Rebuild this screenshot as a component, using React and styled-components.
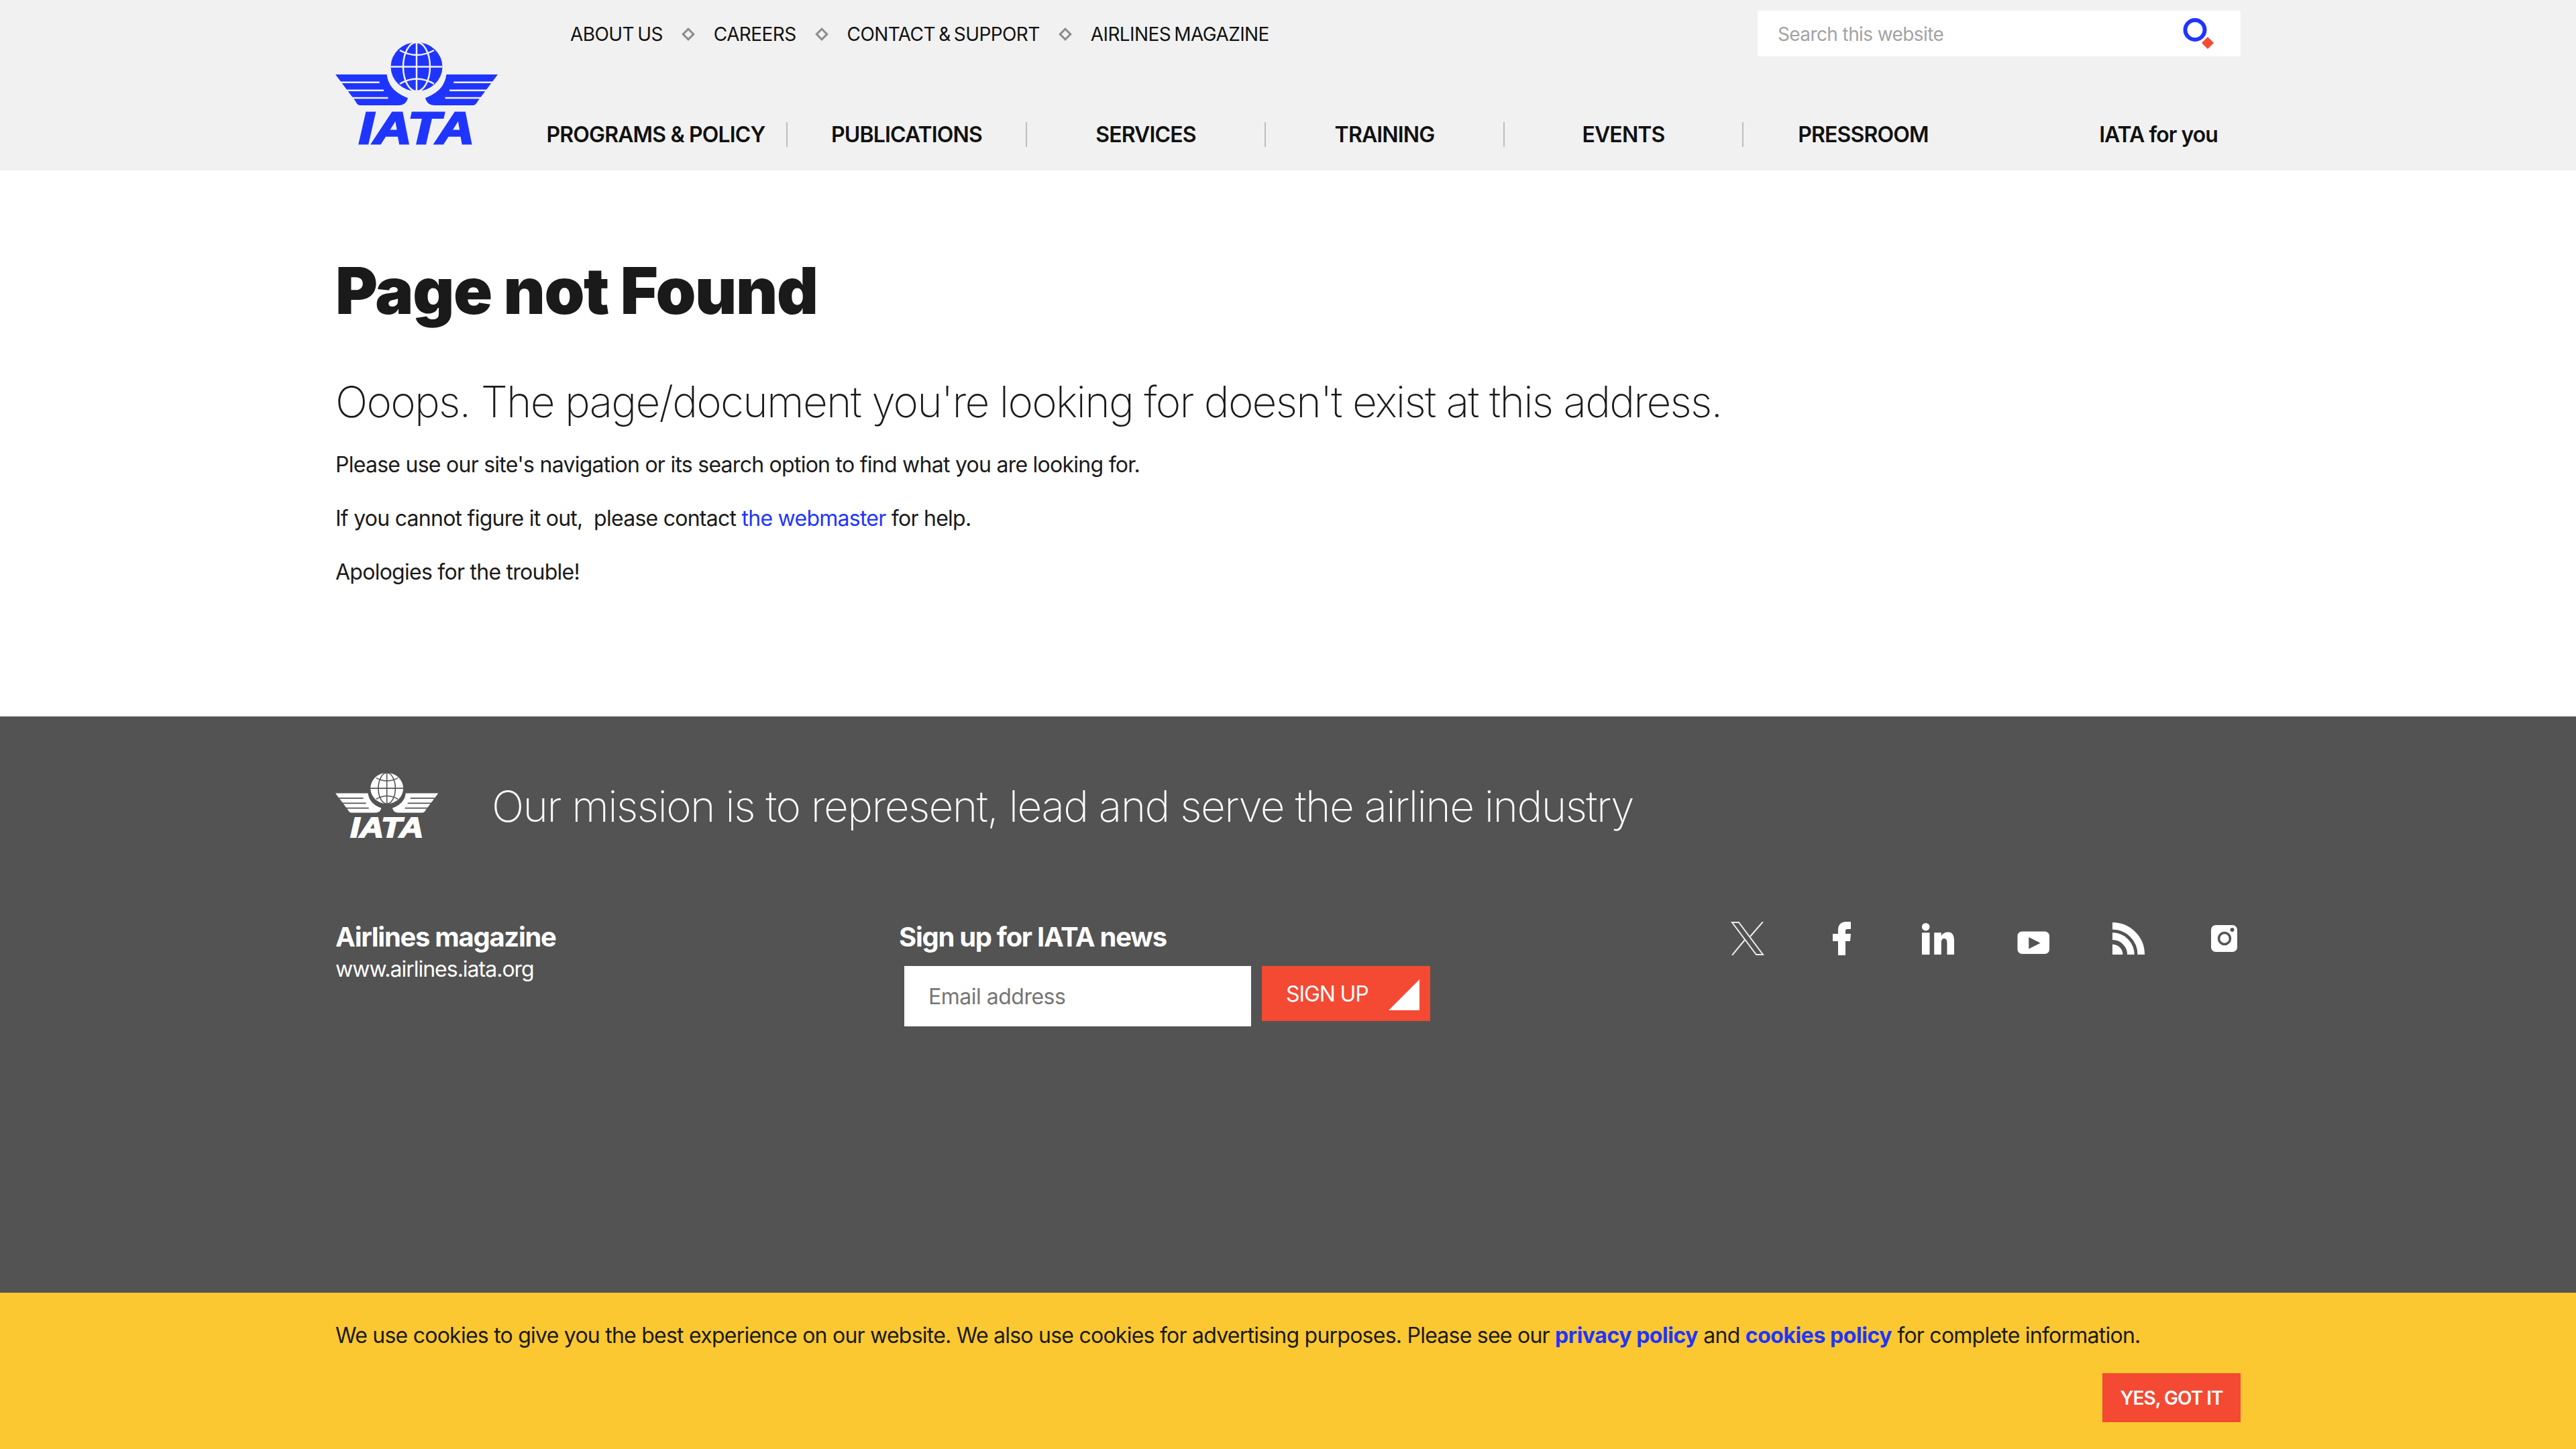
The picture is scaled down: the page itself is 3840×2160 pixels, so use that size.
import React from 'react';
import styled, { createGlobalStyle } from 'styled-components';

const BLUE = '#1f35ff';
const RED = '#f44932';
const FOOTER = '#535353';

const GlobalStyle = createGlobalStyle`
	html, body {
		margin: 0;
		padding: 0;
		background: #fff;
		font-family: Inter, "Liberation Sans", sans-serif;
		color: #1a1a1a;
	}
	* {
		box-sizing: border-box;
	}
`;

const Page = styled.div`
	width: 3840px;
	height: 2160px;
	overflow: hidden;
`;

const Header = styled.header`
	height: 254px;
	background: #f1f1f1;
	display: flex;
	justify-content: center;
`;

const HeaderInner = styled.div`
	width: 2840px;
	display: flex;
`;

const LogoSlot = styled.a`
	width: 283px;
	flex: none;
	padding-top: 63px;
`;

const HeaderRight = styled.div`
	flex: 1;
	display: flex;
	flex-direction: column;
	padding-top: 16px;
`;

const TopRow = styled.div`
	height: 68px;
	display: flex;
	justify-content: space-between;
	align-items: center;
	padding-left: 67px;
`;

const TopLinks = styled.nav`
	display: flex;
	align-items: center;
	gap: 28px;
	padding-top: 1px;
`;

const TopLink = styled.a`
	font-size: 28px;
	letter-spacing: -0.6px;
	word-spacing: -2px;
	color: #111;
	white-space: nowrap;
`;

const Diamond = styled.span`
	width: 14px;
	height: 14px;
	margin: 0 3px;
	border: 3px solid #8c8c8c;
	transform: rotate(45deg);
`;

const SearchBox = styled.form`
	width: 720px;
	height: 68px;
	background: #fff;
	display: flex;
	padding-right: 40px;
`;

const SearchInput = styled.input`
	flex: 1;
	border: 0;
	outline: 0;
	background: transparent;
	padding: 1px 0 0 30px;
	font-family: inherit;
	font-size: 28px;
	letter-spacing: -0.6px;

	&::placeholder {
		color: #a3a3a3;
		opacity: 1;
	}
`;

const SearchIcon = styled.svg`
	width: 46px;
	height: 46px;
	margin-top: 11px;
`;

const MainNav = styled.nav`
	margin-top: 98px;
	height: 37px;
	display: flex;
	align-items: stretch;
`;

const NavCell = styled.a`
	width: ${props => props.$width}px;
	display: flex;
	align-items: center;
	justify-content: center;
	font-size: 32px;
	font-weight: 600;
	letter-spacing: -0.85px;
	color: #111;
	white-space: nowrap;
	border-right: ${props => props.$last ? '0' : '2px solid #bdbdbd'};
`;

const NavExtra = styled.a`
	margin-left: auto;
	padding-right: 34px;
	display: flex;
	align-items: center;
	font-size: 32px;
	font-weight: 600;
	letter-spacing: -0.95px;
	color: #111;
`;

const Main = styled.main`
	height: 814px;
	padding: 119px 500px 0;
`;

const Title = styled.h1`
	margin: 0 0 66px;
	font-size: 96px;
	line-height: 120px;
	font-weight: 900;
	letter-spacing: -1.4px;
	color: #1a1a1a;
`;

const Subtitle = styled.h2`
	margin: 0 0 30px;
	font-size: 64px;
	line-height: 80px;
	font-weight: 200;
	letter-spacing: -1.77px;
	color: #1a1a1a;
`;

const Text = styled.p`
	margin: 0 0 32px;
	font-size: 32px;
	line-height: 48px;
	letter-spacing: -0.74px;
	white-space: pre-wrap;
`;

const BlueLink = styled.a`
	color: ${BLUE};
	font-weight: ${props => props.$bold ? 700 : 400};
	letter-spacing: ${props => props.$bold ? '-0.45px' : 'inherit'};
`;

const Footer = styled.footer`
	height: 1092px;
	background: ${FOOTER};
	padding: 84px 500px 0;
	color: #fff;
`;

const MissionRow = styled.div`
	display: flex;
	align-items: flex-start;
	gap: 79px;
`;

const Mission = styled.p`
	margin: 10px 0 0;
	font-size: 64px;
	line-height: 80px;
	font-weight: 200;
	letter-spacing: -1.61px;
`;

const FooterGrid = styled.div`
	margin-top: 115px;
	display: flex;
	align-items: flex-start;
`;

const MagazineCol = styled.div`
	width: 840px;
`;

const ColTitle = styled.div`
	font-size: 40px;
	line-height: 48px;
	font-weight: 700;
	letter-spacing: -1.3px;
`;

const MagazineUrl = styled.a`
	display: block;
	margin-top: 4px;
	font-size: 32px;
	line-height: 40px;
	letter-spacing: -1px;
`;

const SignUpCol = styled.div`
	flex: 1;
`;

const SignUpForm = styled.form`
	margin: 19px 0 0 8px;
	display: flex;
	align-items: flex-start;
	gap: 16px;
`;

const EmailInput = styled.input`
	width: 517px;
	height: 90px;
	border: 0;
	outline: 0;
	background: #fff;
	padding: 0 0 0 36px;
	font-family: inherit;
	font-size: 32px;
	letter-spacing: -0.5px;

	&::placeholder {
		color: #757575;
		opacity: 1;
	}
`;

const SignUpButton = styled.button`
	width: 251px;
	height: 82px;
	border: 0;
	background: ${RED};
	color: #fff;
	display: flex;
	align-items: center;
	justify-content: space-between;
	padding: 0 16px 0 36px;
	font-family: inherit;
	font-size: 32px;
	letter-spacing: -1.1px;
`;

const Corner = styled.svg`
	width: 46px;
	height: 46px;
	margin-top: 4px;
`;

const Socials = styled.div`
	margin-top: 1px;
	display: flex;
	gap: 92px;
`;

const SocialIcon = styled.svg`
	width: 50px;
	height: 50px;
	display: block;
`;

const CookieBar = styled.div`
	position: fixed;
	left: 0;
	right: 0;
	bottom: 0;
	height: 233px;
	background: #fbc831;
	padding: 40px 500px 0;
`;

const CookieText = styled.p`
	margin: 0;
	font-size: 32px;
	line-height: 48px;
	letter-spacing: -0.76px;
	color: #1a1a1a;
`;

const CookieActions = styled.div`
	margin-top: 32px;
	display: flex;
	justify-content: flex-end;
`;

const CookieButton = styled.button`
	width: 206px;
	height: 73px;
	border: 0;
	background: ${RED};
	color: #fff;
	font-family: inherit;
	font-size: 28px;
	font-weight: 600;
	letter-spacing: -1px;
`;

const LogoSvg = styled.svg`
	display: block;
	overflow: visible;
`;

const LogoWord = styled.text`
	font-family: "Liberation Sans", Arial, sans-serif;
	font-size: 66px;
	font-weight: 700;
	font-style: italic;
`;

// Una sola ala, la derecha sale de reflejarla
const Wing = ({ fill, cut }) => (
	<g>
		<path fill={fill} d="M0 48 H76.6 C79 66 90 76 108 83 C106 90 102 94 94 94 H38 C34 94 32 92 30 88 Z" />
		<g stroke={cut} strokeWidth="2.6">
			<path d="M4 59.7 H65.7" />
			<path d="M14 71.7 H72" />
			<path d="M24 83 H78.5" />
		</g>
	</g>
);

const Logo = ({ width, fill, cut }) => (
	<LogoSvg width={width} viewBox="0 0 243 168">
		<Wing fill={fill} cut={cut} />
		<g transform="translate(242 0) scale(-1 1)">
			<Wing fill={fill} cut={cut} />
		</g>
		<ellipse cx="121" cy="36.5" rx="43" ry="42" fill={cut} />
		<ellipse cx="121" cy="36.5" rx="38.5" ry="36.5" fill={fill} />
		<g fill="none" stroke={cut} strokeWidth="2.5">
			<ellipse cx="121" cy="36.5" rx="20" ry="36.5" />
			<path d="M121 0 V73" />
			<path d="M82.5 36.5 H159.5" />
			<path d="M96 12 Q121 26 147 12" />
			<path d="M96 62 Q121 47 147 62" />
		</g>
		<LogoWord x="35" y="151" fill={fill} stroke={fill} strokeWidth="3" textLength="172" lengthAdjust="spacingAndGlyphs">IATA</LogoWord>
	</LogoSvg>
);

const mainItems = [
	{ label: 'PROGRAMS & POLICY', width: 391 },
	{ label: 'PUBLICATIONS', width: 357 },
	{ label: 'SERVICES', width: 356 },
	{ label: 'TRAINING', width: 356 },
	{ label: 'EVENTS', width: 356 },
	{ label: 'PRESSROOM', width: 357, last: true },
];

const topItems = ['ABOUT US', 'CAREERS', 'CONTACT & SUPPORT', 'AIRLINES MAGAZINE'];

const App = () => {
	return (
		<Page>
			<GlobalStyle />
			<Header>
				<HeaderInner>
					<LogoSlot>
						<Logo width={243} fill={BLUE} cut="#f1f1f1" />
					</LogoSlot>
					<HeaderRight>
						<TopRow>
							<TopLinks>
								{topItems.map((item, i) => (
									<React.Fragment key={item}>
										{i > 0 && <Diamond />}
										<TopLink>{item}</TopLink>
									</React.Fragment>
								))}
							</TopLinks>
							<SearchBox>
								<SearchInput placeholder="Search this website" />
								<SearchIcon viewBox="0 0 46 46">
									<circle cx="18" cy="17.5" r="14.5" fill="none" stroke={BLUE} strokeWidth="6" />
									<polygon points="37,28 46,37 37,46 28,37" fill={RED} />
								</SearchIcon>
							</SearchBox>
						</TopRow>
						<MainNav>
							{mainItems.map(item => (
								<NavCell key={item.label} $width={item.width} $last={item.last}>{item.label}</NavCell>
							))}
							<NavExtra>IATA for you</NavExtra>
						</MainNav>
					</HeaderRight>
				</HeaderInner>
			</Header>
			<Main>
				<Title>Page not Found</Title>
				<Subtitle>Ooops. The page/document you're looking for doesn't exist at this address.</Subtitle>
				<Text>Please use our site's navigation or its search option to find what you are looking for.</Text>
				<Text>If you cannot figure it out,  please contact <BlueLink>the webmaster</BlueLink> for help.</Text>
				<Text>Apologies for the trouble!</Text>
			</Main>
			<Footer>
				<MissionRow>
					<Logo width={154} fill="#fff" cut={FOOTER} />
					<Mission>Our mission is to represent, lead and serve the airline industry</Mission>
				</MissionRow>
				<FooterGrid>
					<MagazineCol>
						<ColTitle>Airlines magazine</ColTitle>
						<MagazineUrl>www.airlines.iata.org</MagazineUrl>
					</MagazineCol>
					<SignUpCol>
						<ColTitle>Sign up for IATA news</ColTitle>
						<SignUpForm>
							<EmailInput placeholder="Email address" />
							<SignUpButton type="button">
								SIGN UP
								<Corner viewBox="0 0 46 46">
									<polygon points="46,0 46,46 0,46" fill="#fff" />
								</Corner>
							</SignUpButton>
						</SignUpForm>
					</SignUpCol>
					<Socials>
						<SocialIcon viewBox="0 0 50 50">
							<polygon points="2,1 12,1 48,49 38,49" fill="none" stroke="#ececec" strokeWidth="2" />
							<path d="M48 0 L29 22 M21 27 L2 50" fill="none" stroke="#ececec" strokeWidth="2" />
						</SocialIcon>
						<SocialIcon viewBox="0 0 50 50">
							<path fill="#fff" d="M18 50 V29 H10 V18 H18 V12 C18 4 23 0 30 0 H37 V11 H32 C29.5 11 29 12 29 15 V18 H37 L36 29 H29 V50 Z" />
						</SocialIcon>
						<SocialIcon viewBox="0 0 52 50">
							<circle cx="7" cy="7" r="6" fill="#fff" />
							<rect x="1" y="16" width="12" height="34" fill="#fff" />
							<path fill="#fff" d="M20 16 H31 V21 C33 17 37 15 42 15 C48 15 51 20 51 28 V50 H40 V31 C40 27 38 25 35.5 25 C33 25 31 27 31 31 V50 H20 Z" />
						</SocialIcon>
						<SocialIcon viewBox="0 0 52 50">
							<rect x="1.5" y="14" width="49.5" height="35" rx="7" fill="#fff" />
							<polygon points="19,23 37,32 19,41" fill={FOOTER} />
						</SocialIcon>
						<SocialIcon viewBox="0 0 52 50">
							<path d="M1 5.5 A44.5 44.5 0 0 1 45.5 50" fill="none" stroke="#fff" strokeWidth="11" />
							<path d="M1 21.5 A28.5 28.5 0 0 1 29.5 50" fill="none" stroke="#fff" strokeWidth="11" />
							<path d="M1 34 A16 16 0 0 1 17 50 H1 Z" fill="#fff" />
						</SocialIcon>
						<SocialIcon viewBox="0 0 50 50">
							<rect x="6" y="5" width="39" height="40" rx="7" fill="#fff" />
							<circle cx="26" cy="25" r="8.5" fill="none" stroke={FOOTER} strokeWidth="3.5" />
							<circle cx="37.5" cy="12" r="3" fill={FOOTER} />
						</SocialIcon>
					</Socials>
				</FooterGrid>
			</Footer>
			<CookieBar>
				<CookieText>
					We use cookies to give you the best experience on our website. We also use cookies for advertising purposes. Please see our <BlueLink $bold>privacy policy</BlueLink> and <BlueLink $bold>cookies policy</BlueLink> for complete information.
				</CookieText>
				<CookieActions>
					<CookieButton type="button">YES, GOT IT</CookieButton>
				</CookieActions>
			</CookieBar>
		</Page>
	);
};

export default App;
